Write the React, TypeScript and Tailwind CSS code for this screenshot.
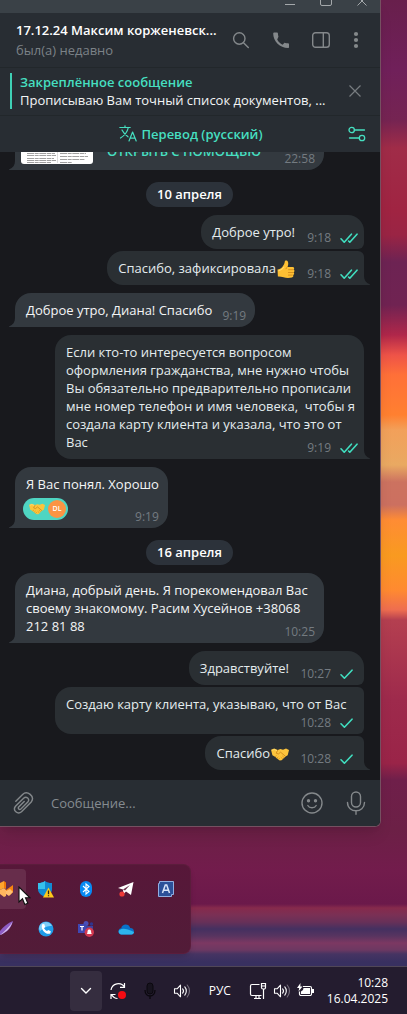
import React from "react";

function Time({ value, checks = 0 }: { value: string; checks?: number }) {
  return (
    <span className="absolute right-0 bottom-0 flex h-[22px] items-center pr-[6px] text-[12px] text-[#747b81]">
      <time className={checks ? "pr-[9px]" : "pr-[3px]"}>{value}</time>
      {checks > 0 && (
        <svg width="18" height="12" viewBox="0 0 18 12" fill="none" stroke="#40dfc0" strokeWidth="1.6" strokeLinecap="round" strokeLinejoin="round" role="img" aria-label={checks === 2 ? "Прочитано" : "Отправлено"}>
          {checks === 2 ? (
            <path d="M1 6.8 4.2 10.2 11.4 2.2M8.6 9 9.8 10.2 17 2.2" />
          ) : (
            <path d="M1 6.8 4.4 10.2 12 2.2" />
          )}
        </svg>
      )}
    </span>
  );
}

function Tail({ out }: { out?: boolean }) {
  return out ? (
    <svg className="absolute bottom-0 left-full" width="6" height="9" viewBox="0 0 6 9" aria-hidden="true">
      <path d="M0 0C0 4 2 7 6 8.5V9H0Z" fill="#2a2f33" />
    </svg>
  ) : (
    <svg className="absolute right-full bottom-0" width="6" height="9" viewBox="0 0 6 9" aria-hidden="true">
      <path d="M6 0C6 4 4 7 0 8.5V9H6Z" fill="#33393f" />
    </svg>
  );
}

function Incoming({ time, spacer = "w-[38px]", children, reaction }: { time: string; spacer?: string; children: React.ReactNode; reaction?: React.ReactNode }) {
  return (
    <article className="relative max-w-[309px] self-start rounded-2xl rounded-bl-none bg-[#33393f] py-2 pr-[5px] pl-[11px] text-[#f3f5f6]">
      <p className="flow-root whitespace-pre-wrap">
        {children}
        <span className={"float-right h-[13px] " + spacer} />
      </p>
      {reaction}
      <Time value={time} />
      <Tail />
    </article>
  );
}

function Outgoing({ time, checks, spacer = "w-[70px]", shape, tail, children }: { time: string; checks: number; spacer?: string; shape: string; tail?: boolean; children: React.ReactNode }) {
  return (
    <article className={"relative max-w-[309px] self-end bg-[#2a2f33] py-2 pr-[5px] pl-[11px] text-[#e4ecee] " + shape}>
      <p className="flow-root whitespace-pre-wrap">
        {children}
        <span className={"float-right h-[13px] " + spacer} />
      </p>
      <Time value={time} checks={checks} />
      {tail && <Tail out />}
    </article>
  );
}

function DatePill({ children }: { children: React.ReactNode }) {
  return (
    <h2 className="my-1 self-center rounded-full bg-[#2c323a] px-[11px] text-[13px] leading-[25px] font-semibold text-white">{children}</h2>
  );
}

function Handshake({ className }: { className: string }) {
  return (
    <svg className={className} viewBox="0 0 18 13" role="img" aria-label="Рукопожатие">
      <path d="M0 1.8 3.2 .6 6.8 2 9.3 1.1 12 1.7 15 .5 18 2 16.7 7.3 14.6 8.4 10.6 12.3 8.7 12.4 4 8.8 1.4 7.3Z" fill="#fcc43c" />
      <path d="M6.8 2 5.2 5.2 7.3 6 9.6 4.2 14.6 8.4" fill="none" stroke="#c98218" strokeWidth=".8" />
      <path d="m4 8.8 1.7-1.3M5.8 10.2l1.6-1.5M7.4 11.5l1.4-1.5M11.8 10.9 9.7 9.1M13.2 9.6l-2-1.8" stroke="#dc951c" strokeWidth=".8" />
      <path d="m1 2.3 2.2-.8L6 2.6" fill="none" stroke="#ffe27a" strokeWidth=".8" />
    </svg>
  );
}

function ThumbsUp() {
  return (
    <svg className="-my-1 ml-[1px] inline-block h-[19px] w-[18px] align-middle" viewBox="0 0 18 19" role="img" aria-label="Палец вверх">
      <path d="M.5 9.6C2.5 9 4 8.3 5.3 6.9 6.8 5.2 7.7 3.3 7.8 1.5 8 .1 10.4.2 11 1.9c.5 1.5.2 3.2-.5 5h5.2c1.6 0 2 2 .8 2.7 1.3.6 1.3 2.3 0 2.8 1 .6.9 2.2-.4 2.6.7.9.1 2.2-1.2 2.4-2.5.7-5.9.6-8.3-.1-2-.6-4-.9-5.7-.8Z" fill="#fdbf33" />
      <path d="M11.2 9.7h5.2M11 12.5h5.3M11 15.1h4.6" stroke="#cf8719" strokeWidth=".8" />
      <path d="M10.5 6.9c-.9.5-1.4 1.2-1.6 2.2" fill="none" stroke="#d48c1b" strokeWidth=".9" />
      <path d="M1.5 10.7C4 10 6 8.9 7.1 6.9" fill="none" stroke="#ffe07a" strokeWidth=".9" />
    </svg>
  );
}

function Speaker() {
  return (
    <svg width="18" height="16" viewBox="0 0 18 16" fill="none" stroke="#fff" strokeWidth="1.1" strokeLinejoin="round" strokeLinecap="round" aria-hidden="true">
      <path d="M1.5 5.8h2.6L7.5 2.2v11.6L4.1 10.2H1.5ZM9.6 5.8c1 1.2 1 3.2 0 4.4M11.8 3.9c2 2.2 2 6 0 8.2" />
      <path d="M14.2 2c3 3.3 3 8.7 0 12" stroke="#77707e" />
    </svg>
  );
}

const iconButton = "flex shrink-0 items-center justify-center";

function ChatWindow() {
  return (
    <main className="mr-[26px] overflow-hidden rounded-br-[6px] border-r border-b border-[#755061] bg-[#18191d] text-[13px] leading-[18px] shadow-lg">
      <div className="flex h-[13px] justify-end gap-[24px] overflow-hidden bg-[#3a4147] pr-[12px] text-[#a4a8ab]">
        <button aria-label="Свернуть" className="-mt-[7px] h-[13px] w-3">
          <svg width="12" height="13" viewBox="0 0 12 13" aria-hidden="true"><path d="M1 11.5h10" stroke="currentColor" /></svg>
        </button>
        <button aria-label="Развернуть" className="-mt-[7px] h-[13px] w-3">
          <svg width="12" height="13" viewBox="0 0 12 13" aria-hidden="true"><rect x=".5" y="1.5" width="11" height="11" rx="1.5" fill="none" stroke="currentColor" /></svg>
        </button>
        <button aria-label="Закрыть" className="-mt-[7px] h-[13px] w-3">
          <svg width="12" height="13" viewBox="0 0 12 13" aria-hidden="true"><path d="m1.5 3.5 9 9m0-9-9 9" stroke="currentColor" /></svg>
        </button>
      </div>

      <header className="flex h-[54px] items-center bg-[#282d33] pr-3 pl-4">
        <div className="min-w-0 flex-1 leading-[20px]">
          <h1 className="truncate font-semibold text-white">17.12.24 Максим корженевск...</h1>
          <p className="text-[#7c8287]">был(а) недавно</p>
        </div>
        <div className="flex items-center text-[#84888b]">
          <button aria-label="Поиск" className={iconButton + " mr-4 h-6 w-6"}>
            <svg width="18" height="18" viewBox="0 0 18 18" fill="none" stroke="currentColor" strokeWidth="1.4" strokeLinecap="round" aria-hidden="true"><circle cx="7.3" cy="7.5" r="5.7" /><path d="m11.5 11.7 4.8 4.8" /></svg>
          </button>
          <button aria-label="Позвонить" className={iconButton + " mr-4 h-6 w-6"}>
            <svg width="19" height="19" viewBox="0 0 24 24" fill="currentColor" aria-hidden="true"><path d="M6.6 10.8c1.5 2.9 3.8 5.2 6.7 6.7l2.2-2.3c.3-.3.7-.4 1.1-.2 1.2.4 2.4.6 3.7.6.7 0 1.2.5 1.2 1.1v3.6c0 .7-.5 1.2-1.2 1.2C10 21.5 1.5 13 1.5 3.2 1.5 2.500 2 2 2.7 2h3.7c.6 0 1.1.5 1.1 1.2 0 1.3.2 2.5.6 3.7.1.4 0 .8-.3 1.1Z" /></svg>
          </button>
          <button aria-label="Информация" className={iconButton + " mr-[11px] h-6 w-6"}>
            <svg width="20" height="18" viewBox="0 0 20 18" fill="none" stroke="currentColor" strokeWidth="1.4" aria-hidden="true"><rect x="1.7" y="1.7" width="16.6" height="14.6" rx="2.8" /><path d="M12.3 1.7v14.6" /></svg>
          </button>
          <button aria-label="Меню" className={iconButton + " h-6 w-6"}>
            <svg width="6" height="18" viewBox="0 0 6 18" fill="currentColor" aria-hidden="true"><circle cx="3" cy="3" r="2.1" /><circle cx="3" cy="9" r="2.1" /><circle cx="3" cy="15" r="2.1" /></svg>
          </button>
        </div>
      </header>

      <section aria-label="Закреплённое сообщение" className="flex h-12 items-center border-t border-[#22272b] bg-[#282d33] pr-[15px] pb-[2px] pl-[10px]">
        <div className="min-w-0 flex-1 border-l-2 border-[#3fd0b5] pl-2">
          <p className="font-semibold text-[#46dfc0]">Закреплённое сообщение</p>
          <p className="truncate text-[#f3f5f6]">Прописываю Вам точный список документов, ...</p>
        </div>
        <button aria-label="Скрыть" className={iconButton + " h-5 w-5 text-[#777c80]"}>
          <svg width="12" height="12" viewBox="0 0 12 12" aria-hidden="true"><path d="m.5.5 11 11m0-11-11 11" stroke="currentColor" strokeWidth="1.2" /></svg>
        </button>
      </section>

      <div className="flex h-[37px] items-center border-t border-[#22272b] bg-[#282d33] pr-[14px] pb-[1px] pl-8 text-[#46dfc0]">
        <button className="flex flex-1 items-center justify-center gap-1 pl-[2px] font-semibold">
          <svg width="18" height="17" viewBox="0 0 18 17" fill="none" stroke="currentColor" strokeWidth="1.2" strokeLinecap="round" strokeLinejoin="round" aria-hidden="true">
            <path d="M.8 2.5h10.4M6 .8v1.7M9.3 2.5C8.5 6.5 5.5 10.5 1.5 13M3 5c1.5 3 4 5.5 6 6.8M10 16l3.6-9 3.6 9M11.2 13.2h4.8" />
          </svg>
          Перевод (русский)
        </button>
        <button aria-label="Настройки перевода" className={iconButton + " h-5 w-[18px]"}>
          <svg width="18" height="16" viewBox="0 0 18 16" fill="none" stroke="currentColor" strokeWidth="1.3" strokeLinecap="round" aria-hidden="true"><circle cx="3.7" cy="4" r="2.7" /><path d="M6.4 4H16.5M1.5 12h9.8" /><circle cx="14" cy="12" r="2.7" /></svg>
        </button>
      </div>

      <div className="flex flex-col gap-2 pr-4 pb-[10px] pl-[15px]">
        <article className="relative h-[18px] w-full max-w-[309px] rounded-br-2xl bg-[#33393f] pl-[6px]">
          <div className="h-[18px] overflow-hidden">
            <div className="-mt-[10px] flex gap-[14px]">
              <svg width="72" height="22" viewBox="0 0 72 22" role="img" aria-label="Документ">
                <path d="M0 0h72v19a3 3 0 0 1-3 3H3a3 3 0 0 1-3-3Z" fill="#fff" />
                <path d="M6 11.5h28M6 13.5h29M6 16.5h27M6 18.5h29M6 20.5h24M39 11.5h26M39 14.5h28M39 17.5h25M39 20.5h12" stroke="#888" strokeWidth=".8" strokeDasharray="7 .7 4 .6" />
                <path d="M36.5 10v11" stroke="#ddd" />
              </svg>
              <a href="#open" className="font-semibold text-[#46dfc0]">ОТКРЫТЬ С ПОМОЩЬЮ</a>
            </div>
          </div>
          <Time value="22:58" />
          <Tail />
        </article>

        <DatePill>10 апреля</DatePill>
        <div className="-mt-1 flex flex-col gap-[2px]">
          <Outgoing time="9:18" checks={2} spacer="w-[64px]" shape="rounded-2xl rounded-br-[6px]">Доброе утро!</Outgoing>
          <Outgoing time="9:18" checks={2} spacer="w-[64px]" shape="rounded-2xl rounded-tr-[6px] rounded-br-none" tail>Спасибо, зафиксировала<ThumbsUp /></Outgoing>
        </div>
        <Incoming time="9:19">Доброе утро, Диана! Спасибо</Incoming>
        <Outgoing time="9:19" checks={2} spacer="w-[64px]" shape="rounded-2xl rounded-br-none" tail>
          {"Если кто-то интересуется вопросом оформления гражданства, мне нужно чтобы Вы обязательно предварительно прописали мне номер телефон и имя человека,\u00a0 чтобы я создала карту клиента и указала, что это от Вас"}
        </Outgoing>
        <Incoming
          time="9:19"
          spacer="w-[4px]"
          reaction={
            <button aria-label="Реакция DL" className="mt-[5px] -ml-[3px] flex h-[22px] w-[45px] items-center justify-between rounded-full bg-[#4fd5c2] pr-[2px] pl-[6px]">
              <Handshake className="h-3 w-4" />
              <span className="flex h-[18px] w-[18px] items-center justify-center rounded-full bg-[#fb9444] text-[7px] font-semibold text-white">DL</span>
            </button>
          }
        >
          Я Вас понял. Хорошо
        </Incoming>
        <DatePill>16 апреля</DatePill>
        <div className="-mt-1 flex flex-col">
          <Incoming time="10:25" spacer="w-[46px]">Диана, добрый день. Я порекомендовал Вас своему знакомому. Расим Хусейнов +38068 212 81 88</Incoming>
        </div>
        <div className="flex flex-col gap-[2px]">
          <Outgoing time="10:27" checks={1} shape="rounded-2xl rounded-br-[6px]">Здравствуйте!</Outgoing>
          <Outgoing time="10:28" checks={1} shape="rounded-2xl rounded-r-[6px]">Создаю карту клиента, указываю, что от Вас</Outgoing>
          <Outgoing time="10:28" checks={1} shape="rounded-2xl rounded-tr-[6px] rounded-br-none" tail>
            Спасибо<Handshake className="ml-[1px] inline-block h-[13px] w-[18px] align-middle" />
          </Outgoing>
        </div>
      </div>

      <form className="flex h-[46px] items-center bg-[#282d33] px-3 pb-[1px] text-[#84888b]" onSubmit={(e) => e.preventDefault()}>
        <button type="button" aria-label="Прикрепить файл" className={iconButton + " h-6 w-6"}>
          <svg width="22" height="24" viewBox="0 0 22 24" fill="none" stroke="currentColor" strokeWidth="1.4" strokeLinecap="round" aria-hidden="true">
            <path d="M2.8 10.2 9.6 3.4c4.5-4.3 12.8 1.8 8.6 7.6L8.5 20.8c-3.8 3.4-9.2-1.5-6-5.5l8.1-8.1c2.9-2.6 6.6 1 4.2 3.8l-6.9 7c-1.7 1.2-3.3-.5-2.2-2.1l5.5-5.5" />
          </svg>
        </button>
        <input aria-label="Сообщение" placeholder="Сообщение..." className="ml-[15px] min-w-0 flex-1 bg-transparent text-[#f3f5f6] outline-none placeholder:text-[#858b90]" />
        <button type="button" aria-label="Эмодзи" className={iconButton + " h-6 w-6"}>
          <svg width="24" height="24" viewBox="0 0 24 24" fill="none" stroke="currentColor" strokeWidth="1.4" strokeLinecap="round" aria-hidden="true"><circle cx="12" cy="12" r="10" /><path d="M7.8 14.5c1.6 3 6.800 3 8.400 0" /><circle cx="8.5" cy="9.7" r="1" fill="currentColor" /><circle cx="15.5" cy="9.7" r="1" fill="currentColor" /></svg>
        </button>
        <button type="button" aria-label="Голосовое сообщение" className={iconButton + " ml-5 h-6 w-6"}>
          <svg width="24" height="24" viewBox="0 0 24 24" fill="none" stroke="currentColor" strokeWidth="1.4" strokeLinecap="round" aria-hidden="true"><rect x="7.5" y="1" width="9" height="15" rx="4.5" /><path d="M3.5 11.5c0 11 17 11 17 0M12 20v3.3" /></svg>
        </button>
      </form>
    </main>
  );
}

const trayButton = "flex h-10 items-center justify-center rounded";

function TrayPanel() {
  return (
    <aside aria-label="Значки в трее" className="relative mt-[37px] mb-3 grid w-[191px] grid-cols-[26px_repeat(4,40px)] rounded-r-lg border border-l-0 border-[#5b1d3c] bg-[linear-gradient(180deg,#571739,#521c38)] py-[4px] shadow-md">
      <button aria-label="Приложение" className={trayButton + " justify-start rounded-l-none bg-[#672d4b]"}>
        <svg width="13" height="16" viewBox="0 0 13 16" aria-hidden="true"><path d="M0 2 4 0v7L0 9Z" fill="#ffa62e" /><path d="m4 0 2 1.500V8L4 7Z" fill="#f27a08" /><path d="m0 9 4-2 2 2v6l-2 1-4-3Z" fill="#ffb75e" /><path d="m6 9 7-5v7l-3 3-4-3Z" fill="#f8850f" /><path d="m6 10 4-2 3 3-4 4-3-2Z" fill="#ffc070" /></svg>
      </button>
      <button aria-label="Безопасность Windows" className={trayButton}>
        <svg width="16" height="17" viewBox="0 0 16 17" aria-hidden="true"><path d="M7 0c2 1.5 4 2 7 2v6c0 4-3 6-7 8-4-2-7-4-7-8V2c3 0 5-.5 7-2Z" fill="#128bd3" /><path d="M7 0v8H0V2c3 0 5-.5 7-2Z" fill="#37c1ec" /><path d="m10.5 6.5 5.5 10H5Z" fill="#ffc91a" /><path d="M10.5 9.5v3.8m0 1v1" stroke="#29221a" strokeWidth="1.3" /></svg>
      </button>
      <button aria-label="Bluetooth" className={trayButton}>
        <svg width="14" height="16" viewBox="0 0 14 16" aria-hidden="true"><rect x="1" width="12" height="16" rx="6" fill="#078af4" /><path d="m4 5 6 5.5L7 13V3l3 2.5L4 11" fill="none" stroke="#fff" strokeWidth="1.1" /></svg>
      </button>
      <button aria-label="Telegram" className={trayButton}>
        <svg width="16" height="16" viewBox="0 0 16 16" aria-hidden="true"><path d="m0 7 15.5-6L13 14 8 10.5 5.5 13 5 8.5Z" fill="#fff" /><path d="m5 8.5 7-4.5-5 5.5Z" fill="#6b304c" /><circle cx="4" cy="13" r="2.6" fill="#ed3a39" /></svg>
      </button>
      <button aria-label="Раскладка" className={trayButton}>
        <svg width="16" height="16" viewBox="0 0 16 16" aria-hidden="true"><path d="M1.5.5h14v13h-2v2H.5V2.5h1Z" fill="#2c5099" stroke="#91afe2" /><path d="m4.5 12 2.8-8h1.4l2.8 8M5.5 9.3h5" fill="none" stroke="#d8e3f8" strokeWidth="1.5" /></svg>
      </button>
      <button aria-label="Перо" className={trayButton + " justify-start"}>
        <svg width="13" height="16" viewBox="0 0 13 16" aria-hidden="true"><path d="M13 0C8 2 3 6 0 10v4c6-2 11-6 13-14Z" fill="#8d5cc4" /><path d="M0 14C4 11 9 6 12.5 1 10 8 5 12 0 14Z" fill="#d9c3ee" /></svg>
      </button>
      <button aria-label="Звонки" className={trayButton}>
        <svg width="16" height="16" viewBox="0 0 16 16" aria-hidden="true"><circle cx="8" cy="8" r="7.5" fill="#1e9be8" /><path d="M2 4C5-.5 12 0 14 5 9 5 7 6 2 10 .5 8 1 6 2 4Z" fill="#7dcdf7" /><path d="M4.2 3.2 6.2 3l1 3-1.2 1c.7 1.5 1.6 2.4 3 3l1.2-1 2.6 1.3-.5 2.2C8 14.5 2 8 4.2 3.2Z" fill="#fff" /></svg>
      </button>
      <button aria-label="Microsoft Teams" className={trayButton}>
        <svg width="16" height="16" viewBox="0 0 16 16" aria-hidden="true"><circle cx="8" cy="2.5" r="2.5" fill="#4a4fb8" /><circle cx="13.5" cy="3" r="1.7" fill="#2f3590" /><path d="M6 5h9v6H6Z" fill="#3e429e" /><path d="M0 3h8v9H0Z" fill="#3f48b4" /><path d="M2 5.5h4M4 5.5v4" stroke="#fff" strokeWidth="1.2" /><circle cx="11.3" cy="11.2" r="4.7" fill="#d23850" /><path d="M8.7 13c.8-.8.7-1.6.8-2.5.2-2.6 3.4-2.6 3.6 0 .1.9 0 1.7.8 2.5Z" fill="#fff" /></svg>
      </button>
      <button aria-label="OneDrive" className={trayButton}>
        <svg width="16" height="11" viewBox="0 0 16 11" aria-hidden="true"><path d="M3 10.5C-1 9 0 4.5 3.2 4.2 4-.5 11-.8 12.2 4 17 4 17 10 13.5 10.5Z" fill="#0872c9" /><path d="M3 10.5c-3-1-2.5-3.5-1.5-4.5C5 4 8 4.5 16 8c-.2 1.5-1 2.5-2.5 2.5Z" fill="#2db5ed" /></svg>
      </button>
      <svg className="absolute top-[21px] left-[18px]" width="13" height="20" viewBox="0 0 13 20" aria-hidden="true"><path d="M1 1v15l3.5-3.2 2.3 5.7 3-1.3-2.3-5.4h4.4Z" fill="#fff" stroke="#111" strokeWidth="1.1" /></svg>
    </aside>
  );
}

function Taskbar() {
  return (
    <footer className="flex h-12 items-center justify-end border-t border-[#504757] bg-[#241c2f] pr-[19px] text-[12px] text-white">
      <button aria-label="Показать скрытые значки" className="flex h-10 w-8 items-center justify-center rounded bg-[#352d3f]">
        <svg width="12" height="8" viewBox="0 0 12 8" aria-hidden="true"><path d="m1.5 1.5 4.5 4.5 4.5-4.5" fill="none" stroke="#fff" strokeWidth="1.4" strokeLinecap="round" /></svg>
      </button>
      <button aria-label="Обновления" className={iconButton + " h-10 w-8"}>
        <svg width="18" height="18" viewBox="0 0 18 18" aria-hidden="true"><path d="M2 8C3 1 12-.5 15.5 5M15.5 1v4.3H11M2 17v-4.5h4.5M2.5 12.5C4 15 6 16.5 8.5 16.5" fill="none" stroke="#fff" strokeWidth="1.2" /><circle cx="13" cy="13" r="4" fill="#f50b12" /></svg>
      </button>
      <button aria-label="Микрофон" className={iconButton + " h-10 w-8"}>
        <svg width="12" height="18" viewBox="0 0 12 18" aria-hidden="true"><rect x="3" y="1" width="6" height="11" rx="3" fill="#17131e" stroke="#0b080e" /><path d="M1 8c0 8 10 8 10 0M6 14v3" fill="none" stroke="#0b080e" strokeWidth="1.3" /></svg>
      </button>
      <button aria-label="Громкость" className={iconButton + " h-10 w-8"}><Speaker /></button>
      <button className="ml-[10px] w-[24px] text-center">РУС</button>
      <button aria-label="Сеть, звук и батарея" className="ml-[17px] flex h-10 items-center gap-[6px]">
        <svg width="18" height="18" viewBox="0 0 18 18" fill="none" stroke="#fff" strokeWidth="1.2" aria-hidden="true"><path d="M10.5 2.5H3A1.5 1.5 0 0 0 1.5 4v8A1.5 1.5 0 0 0 3 13.5h9.5M5 16.5h7M7 13.5v3M10 13.5v3M12.5 1.5h4v4a1.5 1.5 0 0 1-1.5 1.5h-1a1.5 1.5 0 0 1-1.5-1.5ZM14.5 7v10M12.5 4h4" /></svg>
        <Speaker />
        <svg width="18" height="15" viewBox="0 0 18 15" aria-hidden="true"><path d="M6 3.5h7A1.5 1.5 0 0 1 14.5 5v6a1.5 1.5 0 0 1-1.5 1.5H4A1.5 1.5 0 0 1 2.5 11V8.5" fill="none" stroke="#fff" strokeWidth="1.2" /><path d="M6.5 5H13v6H4V8.5L6 7ZM15 6h2v4h-2Z" fill="#fff" /><path d="M3.5 0 0 5h2.2L1.5 8.5 5.5 3.5H3.3Z" fill="#fff" /></svg>
      </button>
      <button className="ml-3 text-right leading-4"><time dateTime="2025-04-16T10:28">10:28<br />16.04.2025</time></button>
    </footer>
  );
}

export default function App() {
  return (
    <div className="flex min-h-screen flex-col overflow-hidden bg-[linear-gradient(180deg,#681f4c_0px,#70205a_70px,#752452_120px,#a02c48_148px,#a02442_210px,#9a2444_235px,#6d2353_262px,#702352_305px,#b0274a_335px,#ee5348_355px,#ff7038_375px,#ff8030_415px,#f2a05a_430px,#e9a962_465px,#cc7260_482px,#cc7060_505px,#ff8c34_520px,#f99a20_555px,#ff8a30_590px,#ee6d50_610px,#b43f50_620px,#9e2a4c_700px,#9a2448_763px,#6f1f4a_780px,#6c2046_830px,#721c4c_870px,#6b194a_904px,#862a4c_908px,#7a3055_915px,#683058_922px,#443060_929px,#583460_936px,#7c3862_943px,#6c3862_950px,#463462_954px,#383060_962px,#383060_966px)] font-['Open_Sans','Noto_Sans',sans-serif]">
      <ChatWindow />
      <TrayPanel />
      <Taskbar />
    </div>
  );
}
